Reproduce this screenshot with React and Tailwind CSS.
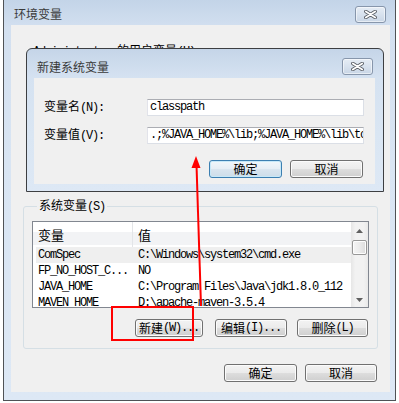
import React from "react";

const FONT = { fontFamily: '"Liberation Mono", "Noto Sans CJK SC", monospace' };
const CJKF = { fontFamily: '"Noto Sans CJK SC", "Liberation Sans", sans-serif' };

function C({ children, cls = "" }) {
  return (
    <span className={"text-[12px] tracking-normal " + cls} style={CJKF}>
      {children}
    </span>
  );
}

function CloseBtn() {
  return (
    <div className="w-[31px] h-[17px] rounded-[3px] border border-[#8796ab] bg-[linear-gradient(to_bottom,#e6edf5_0%,#d8e2ee_50%,#c9d6e6_100%)] shadow-[inset_0_0_0_1px_rgba(255,255,255,0.55)] flex items-center justify-center">
      <svg width="13" height="9" viewBox="0 0 13 9">
        <path d="M1.8 1.5 L11.2 7.5 M11.2 1.5 L1.8 7.5" stroke="#5a5f66" strokeWidth="3.4" strokeLinecap="round" fill="none" />
        <path d="M1.8 1.5 L11.2 7.5 M11.2 1.5 L1.8 7.5" stroke="#ffffff" strokeWidth="1.7" strokeLinecap="round" fill="none" />
      </svg>
    </div>
  );
}

function Btn({ children, w, primary }) {
  const base =
    "h-[18px] rounded-[3px] border flex items-center justify-center leading-none text-black shrink-0 whitespace-nowrap";
  const normal =
    " border-[#707070] bg-[linear-gradient(to_bottom,#f3f3f3_0%,#ebebeb_48%,#dddddd_52%,#cfcfcf_100%)] shadow-[inset_0_0_0_1px_#fbfbfb]";
  const prim =
    " border-[#3c7fb1] bg-[linear-gradient(to_bottom,#f1f7fb_0%,#e6eef5_48%,#d9e5ef_52%,#cddde9_100%)] shadow-[inset_0_0_0_1px_#c7e8f8]";
  return (
    <div className={base + (primary ? prim : normal)} style={{ width: w }}>
      {children}
    </div>
  );
}

const rows = [
  ["ComSpec", "C:\\Windows\\system32\\cmd.exe", true],
  ["FP_NO_HOST_C...", "NO", false],
  ["JAVA_HOME", "C:\\Program Files\\Java\\jdk1.8.0_112", false],
  ["MAVEN_HOME", "D:\\apache-maven-3.5.4", false],
];

function Input({ value }) {
  return (
    <div className="flex-1 h-[17px] bg-white border border-[#dbdfe6] border-t-[#abadb3] border-l-[#e2e3ea] flex items-center pl-[2px] overflow-hidden whitespace-nowrap text-black">
      {value}
    </div>
  );
}

export default function App() {
  return (
    <div
      className="relative w-[399px] h-[403px] bg-white overflow-hidden text-black text-[12px] tracking-[-1.2px]"
      style={FONT}
    >
      {/* outer window */}
      <div className="ml-[3px] w-[393px] h-[401px] border-x border-b border-[#4f5256] bg-[linear-gradient(to_bottom,#c3d4e8_0%,#d3e0f0_7%,#d9e5f3_40%,#dde8f5_100%)] flex flex-col">
        <div className="h-[25px] pt-[3px] flex items-center justify-between pl-[10px] pr-[9px]">
          <C cls="text-[#3a3a3a] leading-none">环境变量</C>
          <CloseBtn />
        </div>
        <div className="flex-1 ml-[7px] mr-[5px] mb-[8px] bg-[#f0f0f0] flex flex-col">
          <div className="mt-[17px] ml-[22px] h-[15px] leading-[15px] whitespace-nowrap">
            Administrator <C>的用户变量</C>(U)
          </div>
          <div className="h-[141px]" />
          <fieldset className="mx-[12px] border border-[#d5dfe5] rounded-[3px] px-[8px] pb-[11px]">
            <legend className="ml-[5px] px-[2px] leading-[14px] whitespace-nowrap">
              <C>系统变量</C>(S)
            </legend>
            <div className="mt-[7px] h-[87px] border border-[#828790] bg-white flex overflow-hidden">
              <div className="flex-1 flex flex-col">
                <div className="h-[25px] shrink-0 flex bg-[linear-gradient(to_bottom,#ffffff_0%,#ffffff_38%,#f2f3f5_40%,#f2f3f5_92%,#ffffff_94%)]">
                  <div className="w-[100px] pl-[5px] flex items-center border-r border-[#e3e5e8]">
                    <C cls="text-[13px]">变量</C>
                  </div>
                  <div className="pl-[5px] flex items-center">
                    <C cls="text-[13px]">值</C>
                  </div>
                </div>
                {rows.map(([k, v, sel]) => (
                  <div
                    key={k}
                    className={
                      "h-[16px] shrink-0 flex items-center whitespace-nowrap " +
                      (sel ? "bg-[#efefef] ml-[3px] pl-[2px]" : "pl-[5px]")
                    }
                  >
                    <div className="w-[95px] shrink-0">{k}</div>
                    <div className="pl-[5px]">{v}</div>
                  </div>
                ))}
              </div>
              <div className="w-[17px] shrink-0 flex flex-col bg-[linear-gradient(to_right,#e6e6e6,#f2f2f2_25%,#f2f2f2_75%,#e9e9e9)]">
                <div className="h-[17px] flex items-center justify-center">
                  <svg width="7" height="4" viewBox="0 0 7 4"><path d="M0 4 L3.5 0 L7 4 Z" fill="#606060" /></svg>
                </div>
                <div className="mx-[1px] mt-[1px] h-[15px] rounded-[2px] border border-[#979797] bg-[linear-gradient(to_right,#f5f5f5,#ebebeb_50%,#dcdcdc)] shadow-[inset_0_0_0_1px_#fdfdfd]" />
                <div className="flex-1" />
                <div className="h-[15px] flex items-center justify-center">
                  <svg width="7" height="4" viewBox="0 0 7 4"><path d="M0 0 L7 0 L3.5 4 Z" fill="#606060" /></svg>
                </div>
              </div>
            </div>
            <div className="mt-[11px] flex justify-end mr-[1px]">
              <Btn w={68}><C>新建</C>(W)...</Btn>
              <div className="w-[12px]" />
              <Btn w={72}><C>编辑</C>(I)...</Btn>
              <div className="w-[10px]" />
              <Btn w={71}><C>删除</C>(L)</Btn>
            </div>
          </fieldset>
          <div className="mt-[15px] flex justify-end gap-[8px] mr-[13px]">
            <Btn w={73}><C>确定</C></Btn>
            <Btn w={72}><C>取消</C></Btn>
          </div>
        </div>
      </div>

      {/* dialog overlay */}
      <div className="absolute left-[26px] top-[48px] w-[358px] h-[144px] border border-[#3d3f42] rounded-t-[6px] bg-[linear-gradient(to_bottom,#c5d5e8_0%,#d5e2f1_20%,#dae6f3_60%,#dde8f5_100%)] flex flex-col">
        <div className="h-[29px] pt-[6px] flex items-center justify-between pl-[10px] pr-[10px]">
          <C cls="text-[#3a3a3a] leading-none">新建系统变量</C>
          <CloseBtn />
        </div>
        <div className="flex-1 ml-[7px] mr-[8px] mb-[7px] bg-[#f0f0f0] flex flex-col pt-[19px]">
          <div className="flex items-center mr-[11px]">
            <div className="w-[113px] pl-[10px] whitespace-nowrap"><C>变量名</C>(N):</div>
            <Input value="classpath" />
          </div>
          <div className="mt-[8px] flex items-center mr-[11px]">
            <div className="w-[113px] pl-[10px] whitespace-nowrap"><C>变量值</C>(V):</div>
            <Input value=".;%JAVA_HOME%\lib;%JAVA_HOME%\lib\tools.jar" />
          </div>
          <div className="mt-[15px] flex justify-end gap-[8px] mr-[12px]">
            <Btn w={73} primary><C>确定</C></Btn>
            <Btn w={73}><C>取消</C></Btn>
          </div>
        </div>
      </div>

      {/* annotations */}
      <svg className="absolute left-0 top-0 pointer-events-none" width="399" height="403" viewBox="0 0 399 403">
        <rect x="112" y="307" width="81" height="33" fill="none" stroke="#ff0000" strokeWidth="2" />
        <line x1="201" y1="306" x2="196.5" y2="165" stroke="#ff0000" strokeWidth="2" />
        <path d="M196 156 L191.5 168 L200.5 168 Z" fill="#ff0000" />
      </svg>
    </div>
  );
}
